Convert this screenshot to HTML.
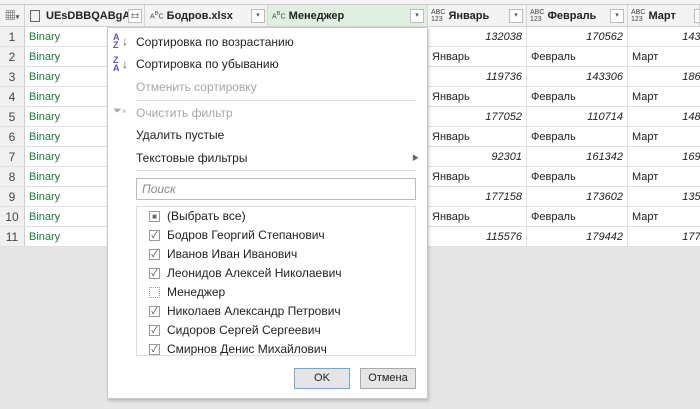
<!DOCTYPE html><html><head><meta charset="utf-8"><style>
*{box-sizing:border-box;margin:0;padding:0}
body{width:700px;height:409px;overflow:hidden;background:#e6e6e6;font-family:"Liberation Sans","Noto Sans CJK SC",sans-serif;font-size:11px;color:#222;position:relative}
.a{position:absolute}
.hdr{position:absolute;top:5px;height:22px;background:#f3f3f3;border-right:1px solid #d4d4d4;border-bottom:1px solid #d4d4d4;font-weight:bold;font-size:11px;line-height:22px;white-space:nowrap;overflow:hidden}
.dd{position:absolute;top:4px;width:14px;height:14px;border:1px solid #bbb;background:#fff;font-size:7px;line-height:12px;text-align:center;color:#555;font-weight:normal}
.typ{font-size:7px;line-height:7px;display:inline-block;font-weight:normal;color:#444;vertical-align:middle}
.row{position:absolute;left:0;width:700px;height:20px;background:#fff;border-bottom:1px solid #e0e0e0;overflow:hidden}
.rn{position:absolute;left:0;width:25px;height:20px;background:#f0f0f0;border-right:1px solid #ccc;text-align:center;line-height:20px;font-size:12px;color:#444}
.c{position:absolute;top:0;height:20px;line-height:21px;border-right:1px solid #e0e0e0;padding:0 4px;font-size:11px}
.num{text-align:right;font-style:italic}
.menu{position:absolute;left:107px;top:27px;width:321px;height:372px;background:#fff;border:1px solid #c8c8c8;box-shadow:1px 2px 3px rgba(0,0,0,.2);font-size:12px}
.mi{position:absolute;left:28px;white-space:nowrap}
.dis{color:#a6a6a6}
.cb{position:absolute;left:12px;width:11px;height:11px;border:1px solid #999;background:#fff;font-size:9px;line-height:9px;text-align:center;color:#444}
.li{position:absolute;left:30px;white-space:nowrap}
</style></head><body>
<div class="a" style="left:0;top:0;width:700px;height:5px;background:#f3f3f3;border-bottom:1px solid #ccc"></div>
<div class="hdr" style="left:0;width:25px;text-align:center;color:#555">▦<span style="font-size:7px">▾</span></div>
<div class="hdr" style="left:25px;width:120px;padding-left:5px"><span style="display:inline-block;width:10px;height:12px;border:1px solid #666;vertical-align:middle;margin-right:6px"></span>UEsDBBQABgA...<div class="dd" style="left:103px;font-size:8px">±±</div></div>
<div class="hdr" style="left:145px;width:123px;padding-left:5px"><span class="typ">A<sup>B</sup>C</span> Бодров.xlsx<div class="dd" style="left:106px">▾</div></div>
<div class="hdr" style="left:268px;width:160px;padding-left:4px;background:#dff0e3"><span class="typ">A<sup>B</sup>C</span> Менеджер<div class="dd" style="left:142px">▾</div></div>
<div class="hdr" style="left:428px;width:99px;padding-left:3px"><span class="typ">ABC<br>123</span> Январь<div class="dd" style="left:81px">▾</div></div>
<div class="hdr" style="left:527px;width:101px;padding-left:3px"><span class="typ">ABC<br>123</span> Февраль<div class="dd" style="left:83px">▾</div></div>
<div class="hdr" style="left:628px;width:72px;padding-left:3px"><span class="typ">ABC<br>123</span> Март<div class="dd" style="left:66px">▾</div></div>

<div class="row" style="top:27px"><div class="rn">1</div><div class="c" style="left:25px;width:120px;color:#1e7a3e">Binary</div><div class="c num" style="left:428px;width:99px">132038</div><div class="c num" style="left:527px;width:101px">170562</div><div class="c num" style="left:628px;width:96px">143950</div></div>
<div class="row" style="top:47px"><div class="rn">2</div><div class="c" style="left:25px;width:120px;color:#1e7a3e">Binary</div><div class="c" style="left:428px;width:99px">Январь</div><div class="c" style="left:527px;width:101px">Февраль</div><div class="c" style="left:628px;width:96px">Март</div></div>
<div class="row" style="top:67px"><div class="rn">3</div><div class="c" style="left:25px;width:120px;color:#1e7a3e">Binary</div><div class="c num" style="left:428px;width:99px">119736</div><div class="c num" style="left:527px;width:101px">143306</div><div class="c num" style="left:628px;width:96px">186450</div></div>
<div class="row" style="top:87px"><div class="rn">4</div><div class="c" style="left:25px;width:120px;color:#1e7a3e">Binary</div><div class="c" style="left:428px;width:99px">Январь</div><div class="c" style="left:527px;width:101px">Февраль</div><div class="c" style="left:628px;width:96px">Март</div></div>
<div class="row" style="top:107px"><div class="rn">5</div><div class="c" style="left:25px;width:120px;color:#1e7a3e">Binary</div><div class="c num" style="left:428px;width:99px">177052</div><div class="c num" style="left:527px;width:101px">110714</div><div class="c num" style="left:628px;width:96px">148850</div></div>
<div class="row" style="top:127px"><div class="rn">6</div><div class="c" style="left:25px;width:120px;color:#1e7a3e">Binary</div><div class="c" style="left:428px;width:99px">Январь</div><div class="c" style="left:527px;width:101px">Февраль</div><div class="c" style="left:628px;width:96px">Март</div></div>
<div class="row" style="top:147px"><div class="rn">7</div><div class="c" style="left:25px;width:120px;color:#1e7a3e">Binary</div><div class="c num" style="left:428px;width:99px">92301</div><div class="c num" style="left:527px;width:101px">161342</div><div class="c num" style="left:628px;width:96px">169150</div></div>
<div class="row" style="top:167px"><div class="rn">8</div><div class="c" style="left:25px;width:120px;color:#1e7a3e">Binary</div><div class="c" style="left:428px;width:99px">Январь</div><div class="c" style="left:527px;width:101px">Февраль</div><div class="c" style="left:628px;width:96px">Март</div></div>
<div class="row" style="top:187px"><div class="rn">9</div><div class="c" style="left:25px;width:120px;color:#1e7a3e">Binary</div><div class="c num" style="left:428px;width:99px">177158</div><div class="c num" style="left:527px;width:101px">173602</div><div class="c num" style="left:628px;width:96px">135950</div></div>
<div class="row" style="top:207px"><div class="rn">10</div><div class="c" style="left:25px;width:120px;color:#1e7a3e">Binary</div><div class="c" style="left:428px;width:99px">Январь</div><div class="c" style="left:527px;width:101px">Февраль</div><div class="c" style="left:628px;width:96px">Март</div></div>
<div class="row" style="top:227px"><div class="rn">11</div><div class="c" style="left:25px;width:120px;color:#1e7a3e">Binary</div><div class="c num" style="left:428px;width:99px">115576</div><div class="c num" style="left:527px;width:101px">179442</div><div class="c num" style="left:628px;width:96px">177850</div></div>

<div class="menu">
<div class="a" style="left:5px;top:5px;font-size:9px;line-height:8px;color:#6a4fb0;font-weight:bold">A<br>Z</div><div class="a" style="left:14px;top:6px;font-size:12px;color:#555">↓</div>
<div class="mi" style="top:7px">Сортировка по возрастанию</div>
<div class="a" style="left:5px;top:28px;font-size:9px;line-height:8px;color:#6a4fb0;font-weight:bold">Z<br>A</div><div class="a" style="left:14px;top:29px;font-size:12px;color:#555">↓</div>
<div class="mi" style="top:29px">Сортировка по убыванию</div>
<div class="mi dis" style="top:52px">Отменить сортировку</div>
<div class="a" style="left:28px;top:72px;width:280px;height:1px;background:#ddd"></div>
<div class="a dis" style="left:5px;top:77px;font-size:11px">⏷<span style="font-size:8px">×</span></div>
<div class="mi dis" style="top:78px">Очистить фильтр</div>
<div class="mi" style="top:100px">Удалить пустые</div>
<div class="mi" style="top:123px">Текстовые фильтры</div>
<div class="a" style="left:304px;top:125px;font-size:7px;color:#666">▶</div>
<div class="a" style="left:28px;top:142px;width:280px;height:1px;background:#ddd"></div>
<div class="a" style="left:28px;top:150px;width:280px;height:22px;border:1px solid #bbb;font-style:italic;color:#888;padding:3px 5px">Поиск</div>
<div class="a" style="left:28px;top:178px;width:280px;height:150px;border:1px solid #ddd">
<div class="cb" style="top:4px;font-size:8px;color:#666">■</div><div class="li" style="top:2px">(Выбрать все)</div>
<div class="cb" style="top:23px">✓</div><div class="li" style="top:21px">Бодров Георгий Степанович</div>
<div class="cb" style="top:42px">✓</div><div class="li" style="top:40px">Иванов Иван Иванович</div>
<div class="cb" style="top:61px">✓</div><div class="li" style="top:59px">Леонидов Алексей Николаевич</div>
<div class="cb" style="top:80px;border:1px dotted #999"></div><div class="li" style="top:78px">Менеджер</div>
<div class="cb" style="top:99px">✓</div><div class="li" style="top:97px">Николаев Александр Петрович</div>
<div class="cb" style="top:118px">✓</div><div class="li" style="top:116px">Сидоров Сергей Сергеевич</div>
<div class="cb" style="top:137px">✓</div><div class="li" style="top:135px">Смирнов Денис Михайлович</div>
</div>
<div class="a" style="left:186px;top:340px;width:56px;height:21px;border:1px solid #6fa8dc;background:#e5e5e5;text-align:center;line-height:19px;font-size:11px">OK</div>
<div class="a" style="left:252px;top:340px;width:56px;height:21px;border:1px solid #aaa;background:#e5e5e5;text-align:center;line-height:19px;font-size:11px">Отмена</div>
</div>
</body></html>
